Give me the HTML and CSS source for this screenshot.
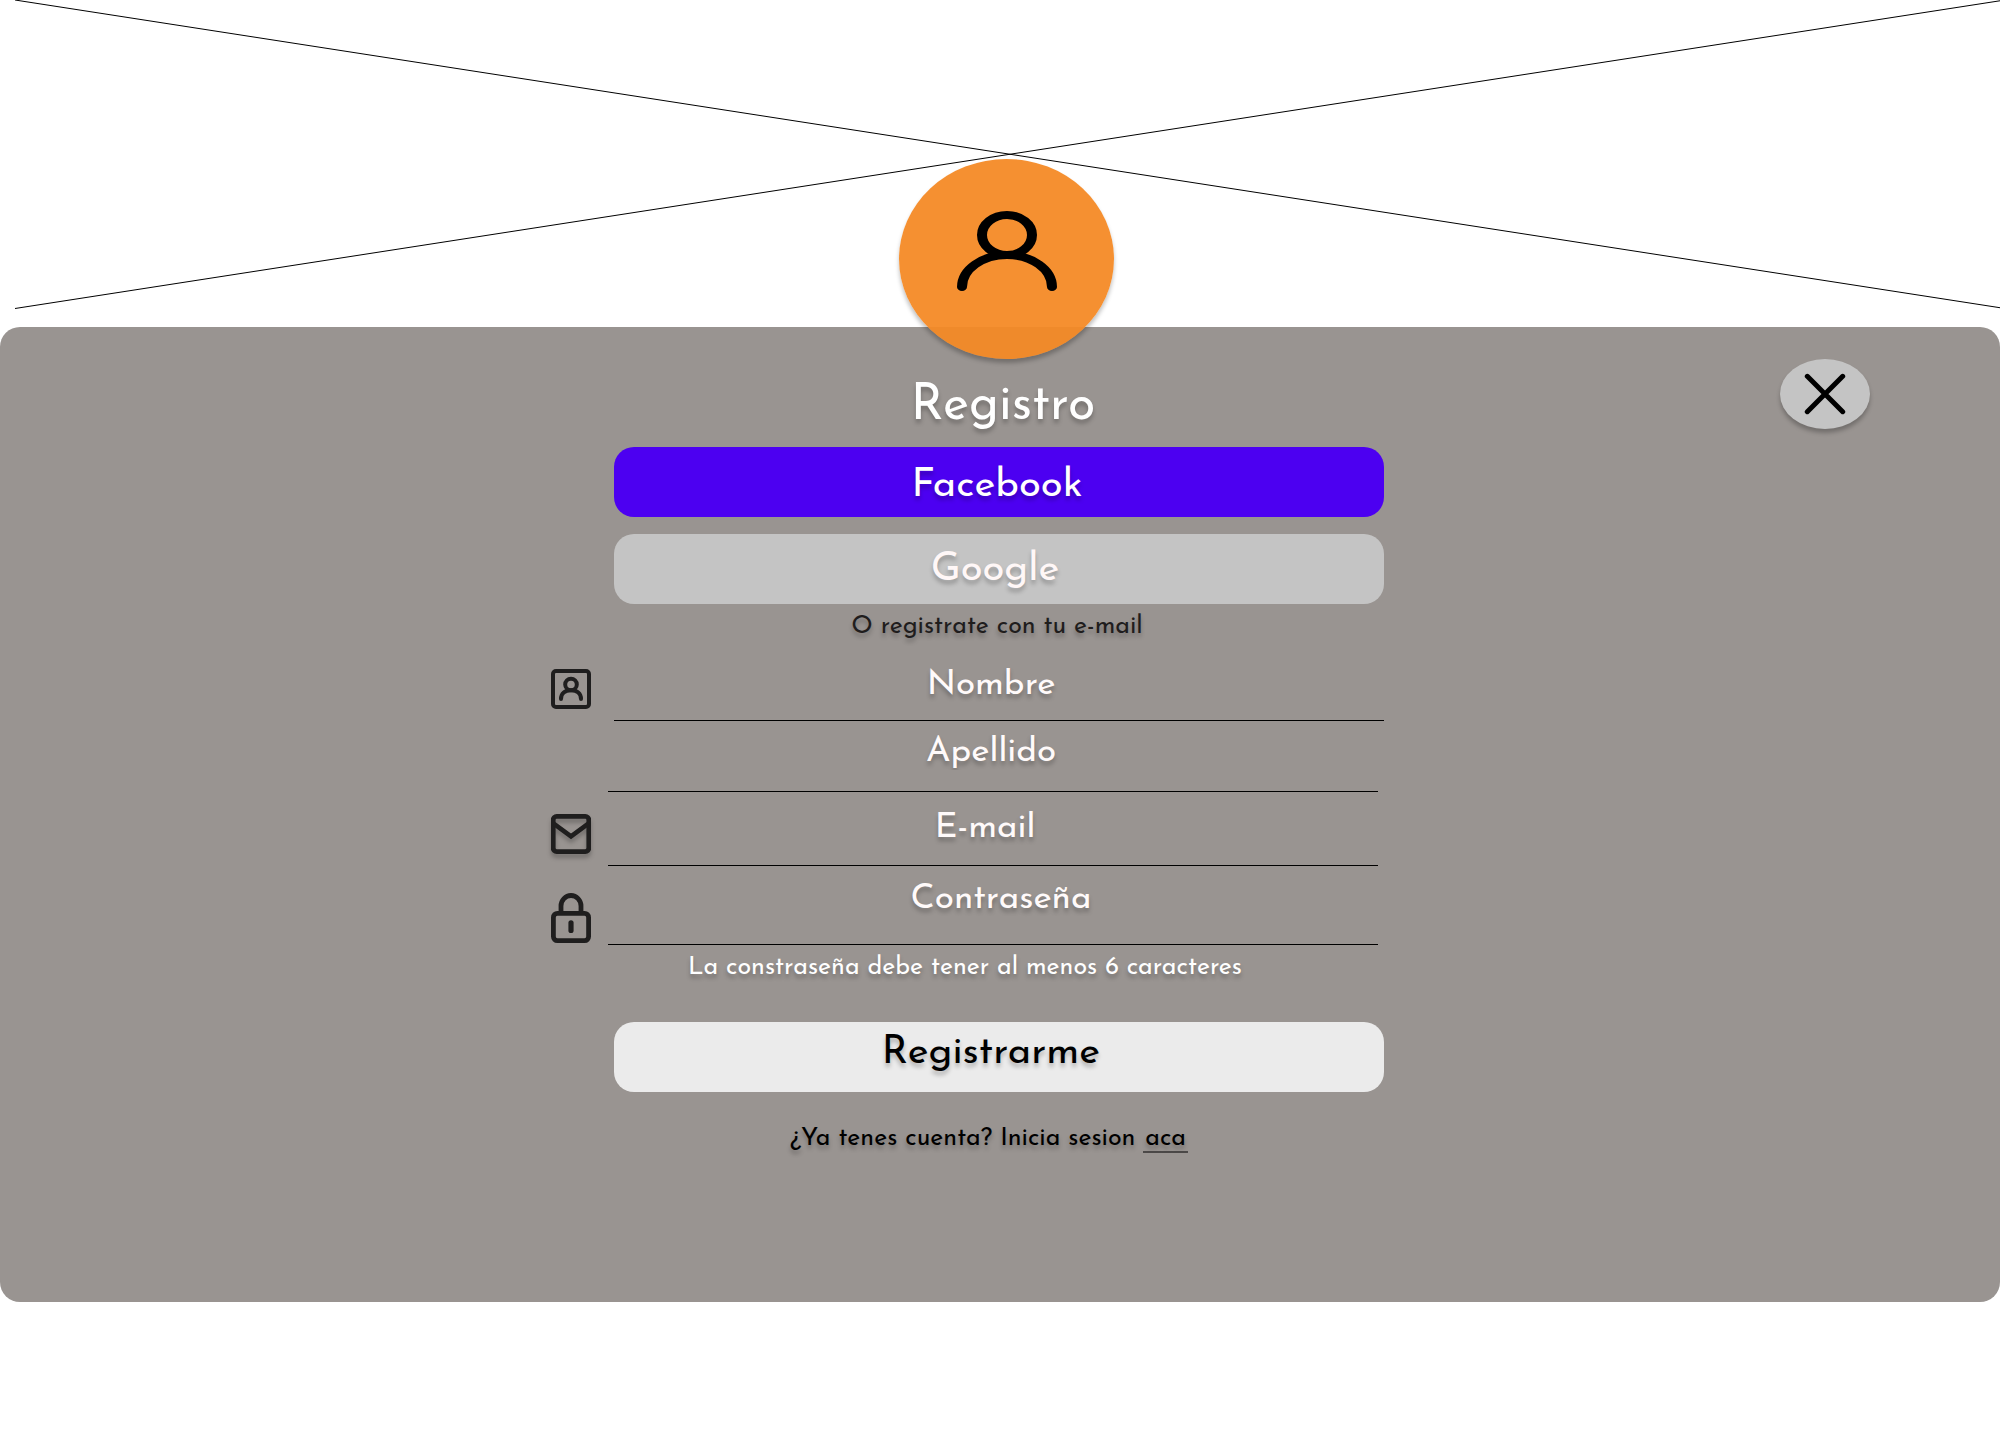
FILE: index.html
```html
<!DOCTYPE html>
<html lang="es">
<head>
<meta charset="utf-8">
<meta name="viewport" content="width=device-width, initial-scale=1">
<title>Registro</title>
<link rel="stylesheet" href="styles.css">
</head>
<body>
<div class="hero">
  <svg class="hero-cross" viewBox="0 0 2000 308" preserveAspectRatio="none" aria-hidden="true">
    <path d="M15 0L2005 308.500M15 308.500L2005 0"/>
  </svg>
</div>
<main class="panel">
  <button class="close" type="button" aria-label="Cerrar">
    <svg width="42" height="42" viewBox="0 0 42 42"><path d="M3.300 3.300L38.700 38.700M38.700 3.300L3.300 38.700"/></svg>
  </button>
  <form class="form">
    <div class="avatar">
      <svg class="avatar-icon" viewBox="0 0 10 10" preserveAspectRatio="none" aria-hidden="true">
        <circle cx="5" cy="3" r="2.500"/>
        <path d="M.5 9.500A4.500 4 0 0 1 9.500 9.500"/>
      </svg>
    </div>
    <h1 class="title">Registro</h1>
    <button class="btn btn-facebook" type="button">Facebook</button>
    <button class="btn btn-google" type="button">Google</button>
    <p class="note">O registrate con tu e-mail</p>

    <label class="icon" for="nombre">
      <svg width="40" height="40" viewBox="0 0 40 40" aria-label="Nombre">
        <rect x="2" y="2" width="36" height="36" rx="3"/>
        <circle cx="20" cy="15.500" r="5.800"/>
        <path d="M10 30C10 24.500 14 21.300 20 21.300S30 24.500 30 30" stroke-linecap="round"/>
      </svg>
    </label>
    <input class="field field-first" id="nombre" type="text" placeholder="Nombre">

    <input class="field field-last" type="text" placeholder="Apellido" aria-label="Apellido">

    <label class="icon icon-mail" for="email">
      <svg width="40" height="40" viewBox="0 0 40 40" aria-label="E-mail">
        <rect x="2.200" y="2.400" width="35.600" height="35.200" rx="3.500" stroke-width="4.800"/>
        <path d="M3 9.800L20 22.300L37 9.800" stroke-width="4.600"/>
      </svg>
    </label>
    <input class="field field-email" id="email" type="email" placeholder="E-mail">

    <label class="icon icon-lock" for="clave">
      <svg width="40" height="50" viewBox="0 0 40 50" aria-label="Contraseña">
        <rect x="2.400" y="20.400" width="35.200" height="27.200" rx="4" stroke-width="4.800"/>
        <path d="M10 20V13A10 10.500 0 0 1 30 13V20" stroke-width="4.800"/>
        <path d="M20 29.800V37.500" stroke-width="5.200" stroke-linecap="round"/>
      </svg>
    </label>
    <input class="field field-pass" id="clave" type="password" placeholder="Contraseña">

    <p class="note note-hint">La constraseña debe tener al menos 6 caracteres</p>
    <button class="btn btn-submit" type="submit">Registrarme</button>
    <p class="note note-login">¿Ya tenes cuenta? Inicia sesion <a class="link" href="#">aca</a></p>
  </form>
</main>
</body>
</html>
```
FILE: styles.css
```css
* { box-sizing: border-box; }

body {
  margin: 0;
  background: #fff;
  font-family: "Josefin Sans", Lato, sans-serif;
  text-shadow: 0 4px 4px rgba(0, 0, 0, .25);
}

.hero { height: 327px; }

.hero-cross {
  display: block;
  width: 100%;
  height: 308px;
  overflow: visible;
  fill: none;
  stroke: #000;
  stroke-width: 1;
}

body { overflow-x: hidden; }

.panel {
  position: relative;
  padding: 0 2px 140px 0;
  border-radius: 20px;
  background: #999491;
}

.close {
  position: absolute;
  top: 32px;
  right: 130px;
  display: flex;
  align-items: center;
  justify-content: center;
  width: 90px;
  height: 70px;
  padding: 0;
  border: 0;
  border-radius: 50%;
  background: #c4c4c4;
  box-shadow: 0 4px 4px rgba(0, 0, 0, .25);
}

.close svg {
  fill: none;
  stroke: #000;
  stroke-width: 5;
  stroke-linecap: round;
}

.form {
  display: grid;
  grid-template-columns: minmax(0, 1fr) minmax(0, 770px) minmax(0, 1fr);
}

.form > * { grid-column: 2; }

.avatar {
  display: flex;
  justify-content: center;
  justify-self: center;
  width: 215px;
  height: 200px;
  margin: -168px 0 0 15px;
  padding-top: 52px;
  border-radius: 50%;
  background: rgba(244, 137, 36, .94);
  box-shadow: 0 4px 4px rgba(0, 0, 0, .25);
}

.avatar-icon {
  width: 100px;
  height: 80px;
  fill: none;
  stroke: #000;
  stroke-width: 1;
  stroke-linecap: round;
}

.title {
  margin: 20px 0 12px;
  padding-left: 8px;
  color: #fff;
  font-size: 50px;
  font-weight: 400;
  line-height: 56px;
  text-align: center;
}

.btn {
  display: flex;
  align-items: center;
  justify-content: center;
  height: 70px;
  padding: 0;
  border: 0;
  border-radius: 20px;
  font-family: inherit;
  font-size: 40px;
  text-shadow: inherit;
}

.btn-facebook {
  padding: 8px 4px 0 0;
  background: #4c00f1;
  color: #fff;
}

.btn-google {
  margin-top: 17px;
  padding: 2px 8px 0 0;
  background: #c4c4c4;
  color: #fff7f7;
}

.btn-submit {
  margin-top: 31px;
  padding: 0 16px 8px 0;
  background: #ebebeb;
  color: #000;
}

.note {
  margin: 0;
  padding-right: 4px;
  color: #1f1d1d;
  font-size: 25px;
  line-height: 46px;
  text-align: center;
}

.note-hint {
  padding-right: 68px;
  color: #fff;
}

.note-login {
  margin-top: 24px;
  padding-right: 20px;
  color: #000;
}

.link {
  padding: 0 2px;
  border-bottom: 2px solid #4c4948;
  color: inherit;
  text-decoration: none;
}

.form > .icon {
  grid-column: 1;
  align-self: end;
  justify-self: end;
  height: 40px;
  margin: 0 23px 12px 0;
}

.form > .icon-lock {
  height: 50px;
  margin-bottom: 2px;
}

.icon svg {
  display: block;
  fill: none;
  stroke: #1f1e1e;
  stroke-width: 4;
}

.icon-mail svg { filter: drop-shadow(0 4px 2px rgba(0, 0, 0, .25)); }

.field {
  min-width: 0;
  margin: 0 6px 0 -6px;
  padding: 0;
  border: 0;
  border-bottom: 1px solid #000;
  border-radius: 0;
  background: none;
  color: #fff;
  font-family: inherit;
  font-size: 35px;
  text-align: center;
  text-shadow: inherit;
}

.field::placeholder {
  color: #fffafa;
  opacity: 1;
}

.field-first {
  height: 71px;
  margin: 0;
  padding-right: 16px;
}

.field-last {
  height: 71px;
  padding: 0 4px 8px 0;
}

.field-email {
  height: 74px;
  padding-right: 16px;
}

.field-pass {
  height: 79px;
  padding: 0 0 12px 16px;
}
```
